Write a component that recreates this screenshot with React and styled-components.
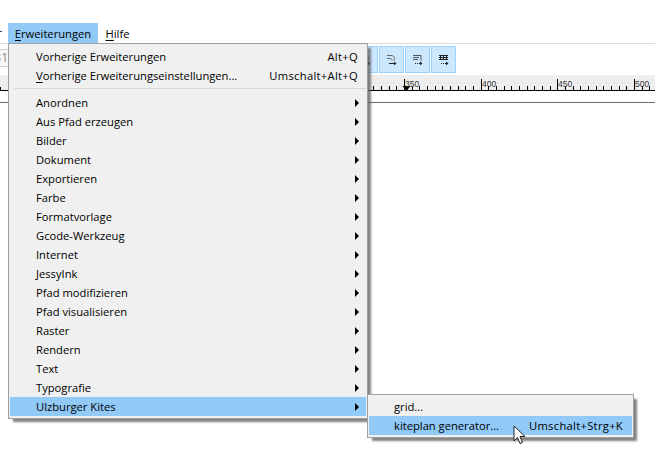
import React from 'react';
import styled, { createGlobalStyle } from 'styled-components';

const GlobalStyle = createGlobalStyle`
  html, body {
    margin: 0;
    padding: 0;
    background: #fff;
    overflow: hidden;
  }
  * { box-sizing: border-box; }
`;

const Window = styled.div`
  position: relative;
  width: 655px;
  height: 461px;
  overflow: hidden;
  background: #fff;
  color: #000;
  font-family: "Open Sans", "Noto Sans", sans-serif;
  font-size: 11.2px;
`;

const MenuBar = styled.div`
  display: flex;
  margin-top: 23px;
  height: 20px;
`;

const HiddenTitle = styled.div`
  width: 8px;
  height: 20px;
  padding-top: 8px;

  &::before {
    content: "";
    display: block;
    width: 2px;
    height: 1px;
    background: #1a4a7a;
  }
`;

const MenuTitle = styled.div`
  display: flex;
  align-items: center;
  justify-content: center;
  width: ${p => p.$width}px;
  height: 20px;
  background: ${p => (p.$active ? '#91c9f7' : 'transparent')};
`;

const Key = styled.span`
  text-decoration: underline;
  text-underline-offset: 2px;
  text-decoration-thickness: 1px;
`;

const Toolbar = styled.div`
  display: flex;
  justify-content: space-between;
  height: 32px;
  padding: 2px 199px 0 0;
  border-top: 1px solid #dcdcdc;
`;

const FieldStub = styled.div`
  width: 8px;
  height: 18px;
  margin-top: 3px;
  border-top: 1px solid #d0d0d0;
  border-bottom: 1px solid #d0d0d0;
  background: #f7f7f7;
  color: #8a8a8a;
  font-size: 12px;
  line-height: 16px;
  overflow: hidden;
  direction: rtl;
`;

const ToolGroup = styled.div`
  display: flex;
  gap: 1px;
`;

const ToolButton = styled.div`
  display: flex;
  align-items: center;
  justify-content: center;
  width: 25px;
  height: 27px;
  background: #cce8ff;
  border: 1px solid #99d1ff;
`;

const Ruler = styled.div`
  position: relative;
  height: 16px;
  background: #eeeeee;
  border-bottom: 1px solid #000;
`;

const RulerSvg = styled.svg`
  display: block;
  width: 655px;
  height: 15px;
`;

const RulerLabel = styled.span`
  position: absolute;
  top: 4px;
  left: ${p => p.$left}px;
  font-family: "Liberation Sans", sans-serif;
  font-size: 8.5px;
  line-height: 11px;
  color: #333;
`;

const Canvas = styled.div`
  margin-top: 11px;
  height: 359px;
  border-top: 1px solid #696969;
`;

const Popup = styled.div`
  position: absolute;
  left: ${p => p.$left}px;
  top: ${p => p.$top}px;
  width: ${p => p.$width}px;
  padding: ${p => p.$padTop || 2}px 1px 2px;
  background: #f0f0f0;
  border: 1px solid #a0a0a0;
  box-shadow: 4px 4px 2px -1px rgba(90, 90, 90, 0.75);
`;

const Row = styled.div`
  position: relative;
  display: flex;
  align-items: center;
  justify-content: space-between;
  height: 19px;
  padding: ${p => (p.$sub ? '0 9px 0 25px' : '0 8px 0 26px')};
  background: ${p => (p.$active ? '#91c9f7' : 'transparent')};
  white-space: nowrap;
`;

const Shortcut = styled.span`
  letter-spacing: 0.3px;
`;

const Divider = styled.div`
  height: 1px;
  margin: 3px 0 4px 4px;
  background: #d7d7d7;
`;

const Arrow = styled.span`
  position: absolute;
  right: 7px;
  top: 6px;
  width: 0;
  height: 0;
  border-left: 4px solid #000;
  border-top: 4px solid transparent;
  border-bottom: 4px solid transparent;
`;

const Cursor = styled.svg`
  position: absolute;
  left: 513px;
  top: 425px;
`;

const items = [
  'Anordnen', 'Aus Pfad erzeugen', 'Bilder', 'Dokument', 'Exportieren', 'Farbe',
  'Formatvorlage', 'Gcode-Werkzeug', 'Internet', 'JessyInk', 'Pfad modifizieren',
  'Pfad visualisieren', 'Raster', 'Rendern', 'Text', 'Typografie'
];

// ruler ticks are laid out from the 350 mark, ten per 50 units
const TICK = 7.67;
const ticks = [];
for (let n = -4; n < 34; n++) ticks.push(404 + n * TICK);

const majors = [
  { x: 404, label: '350' },
  { x: 481, label: '400' },
  { x: 557, label: '450' },
  { x: 634, label: '500' }
];

const ToolIcon = ({ kind }) => (
  <svg width="11" height="10" viewBox="0 0 11 10" fill="none">
    {kind === 'grid' && (
      <path d="M1 .5h9M1 2.5h9M1 4.5h9M2.5 0v5M5.5 0v5M8.5 0v5" stroke="#222" strokeWidth="1" />
    )}
    {kind === 'frame' && (
      <path d="M1 .5h8v5M1 2.5h6M1 4.5h5" stroke="#555" strokeWidth="1" />
    )}
    {kind === 'curve' && (
      <path d="M1 .5h4c3 0 4 2 3 5M1 3.5h3c1 0 2 .5 2 2" stroke="#666" strokeWidth="1" />
    )}
    <path d="M3 8.5h5" stroke="#222" strokeWidth="1" strokeDasharray={kind === 'curve' ? undefined : '1 1'} />
    <path d="M8 6.5l2.5 2-2.5 2z" fill="#222" />
  </svg>
);

const App = () => (
  <Window>
    <GlobalStyle />
    <MenuBar>
      <HiddenTitle />
      <MenuTitle $width={90} $active><span><Key>E</Key>rweiterungen</span></MenuTitle>
      <MenuTitle $width={39}><span><Key>H</Key>ilfe</span></MenuTitle>
    </MenuBar>
    <Toolbar>
      <FieldStub>31</FieldStub>
      <ToolGroup>
        <ToolButton><ToolIcon kind="curve" /></ToolButton>
        <ToolButton><ToolIcon kind="curve" /></ToolButton>
        <ToolButton><ToolIcon kind="frame" /></ToolButton>
        <ToolButton><ToolIcon kind="grid" /></ToolButton>
      </ToolGroup>
    </Toolbar>
    <Ruler>
      <RulerSvg viewBox="0 0 655 15">
        <line x1="0.5" x2="0.5" y1="12" y2="15" stroke="#000" />
        {ticks.map(x => (
          <line key={x} x1={Math.round(x) + 0.5} x2={Math.round(x) + 0.5} y1="11" y2="15" stroke="#000" />
        ))}
        {majors.map(m => (
          <line key={m.x} x1={m.x + 0.5} x2={m.x + 0.5} y1="4" y2="15" stroke="#000" />
        ))}
        <path d="M402.5 11h8l-4 5z" fill="#000" />
      </RulerSvg>
      {majors.map(m => <RulerLabel key={m.x} $left={m.x + 1}>{m.label}</RulerLabel>)}
    </Ruler>
    <Canvas />

    <Popup $left={8} $top={43} $width={360} $padTop={3}>
      <Row><span>Vorherige Erweiterungen</span><Shortcut>Alt+Q</Shortcut></Row>
      <Row><span><Key>V</Key>orherige Erweiterungseinstellungen...</span><Shortcut>Umschalt+Alt+Q</Shortcut></Row>
      <Divider />
      {items.map(label => (
        <Row key={label}>{label}<Arrow /></Row>
      ))}
      <Row $active>Ulzburger Kites<Arrow /></Row>
    </Popup>

    <Popup $left={367} $top={394} $width={267}>
      <Row $sub>grid...</Row>
      <Row $sub $active><span>kiteplan generator...</span><Shortcut>Umschalt+Strg+K</Shortcut></Row>
    </Popup>

    <Cursor width="14" height="20" viewBox="0 0 14 20">
      <path d="M1 1v15l3.5-3.5 2.5 6 2.5-1-2.5-6h5z" fill="#fff" stroke="#222" strokeWidth="1" />
    </Cursor>
  </Window>
);

export default App;
